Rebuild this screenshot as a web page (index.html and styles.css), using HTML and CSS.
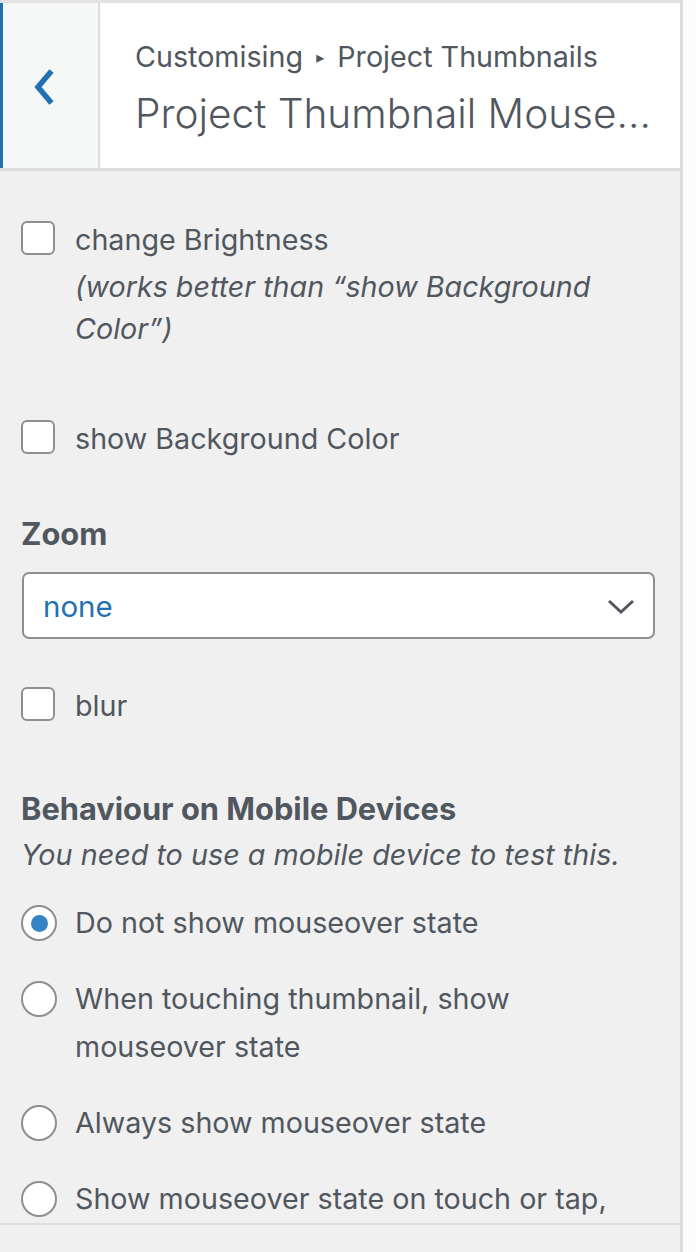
FILE: index.html
```html
<!DOCTYPE html>
<html lang="en">
<head>
<meta charset="utf-8">
<title>Project Thumbnail Mouseover</title>
<link rel="stylesheet" href="styles.css">
</head>
<body>
<div class="panel">
  <header class="head">
    <button class="back" type="button" aria-label="Back">
      <svg class="back-icon" width="22" height="38" viewBox="0 0 22 38"><polyline points="18.5,3 5,19 18.5,35" fill="none" stroke="#2271b1" stroke-width="5.5"/></svg>
    </button>
    <div class="titles">
      <div class="crumb">Customising <span class="tri">▸</span> Project Thumbnails</div>
      <div class="title">Project Thumbnail Mouse...</div>
    </div>
  </header>
  <main class="content">
    <div class="check-row first">
      <span class="box"></span>
      <div class="check-text">
        <div class="check-label">change Brightness</div>
        <div class="desc">(works better than “show Background Color”)</div>
      </div>
    </div>
    <div class="check-row second">
      <span class="box"></span>
      <div class="check-text"><div class="check-label">show Background Color</div></div>
    </div>
    <div class="heading zoom">Zoom</div>
    <div class="select">
      <span class="select-value">none</span>
      <svg class="select-arrow" width="28" height="16" viewBox="0 0 28 16"><polyline points="2,2 14,13 26,2" fill="none" stroke="#50575e" stroke-width="3"/></svg>
    </div>
    <div class="check-row blur">
      <span class="box"></span>
      <div class="check-text"><div class="check-label">blur</div></div>
    </div>
    <div class="heading mobile">Behaviour on Mobile Devices</div>
    <div class="note">You need to use a mobile device to test this.</div>
    <div class="radios">
      <div class="radio-row"><span class="radio checked"></span><span class="radio-label">Do not show mouseover state</span></div>
      <div class="radio-row"><span class="radio"></span><span class="radio-label">When touching thumbnail, show mouseover state</span></div>
      <div class="radio-row"><span class="radio"></span><span class="radio-label">Always show mouseover state</span></div>
      <div class="radio-row"><span class="radio"></span><span class="radio-label">Show mouseover state on touch or tap,</span></div>
    </div>
  </main>
  <footer class="foot"></footer>
</div>
</body>
</html>
```
FILE: styles.css
```css
html, body {
  margin: 0;
  padding: 0;
  background: #fcfcfc;
}
body {
  font-family: Inter, "Liberation Sans", sans-serif;
  color: #50575e;
}
.panel {
  width: 680px;
  height: 1252px;
  background: #f0f0f1;
  border-right: 3px solid #dcdcde;
  display: flex;
  flex-direction: column;
  overflow: hidden;
}
.head {
  display: flex;
  height: 165px;
  border-top: 3px solid #e2e2e4;
  border-bottom: 3px solid #dcdcde;
  background: #fff;
  flex: none;
}
.back {
  width: 100px;
  flex: none;
  margin: 0;
  padding: 0;
  border: 0;
  border-left: 3px solid #2271b1;
  border-right: 2px solid #dcdcde;
  background: #f6f7f7;
  display: flex;
  align-items: center;
  justify-content: flex-start;
}
.back-icon {
  margin-left: 30px;
  margin-top: 3px;
}
.titles {
  flex: 1;
  padding-left: 35px;
  padding-top: 34px;
  min-width: 0;
}
.crumb {
  font-size: 28.7px;
  line-height: 40px;
  white-space: nowrap;
}
.tri {
  font-family: "DejaVu Sans", sans-serif;
  font-size: 16px;
  vertical-align: 4px;
  margin: 0 5px;
}
.title {
  font-size: 40.6px;
  font-weight: 300;
  line-height: 56px;
  margin-top: 8px;
  white-space: nowrap;
}
.content {
  flex: none;
  height: 1052px;
  overflow: hidden;
  padding: 0 25px 0 21px;
}
.check-row {
  display: flex;
  align-items: flex-start;
  gap: 20px;
}
.first { margin-top: 46px; }
.second { margin-top: 66px; }
.blur { margin-top: 44px; }
.box {
  flex: none;
  width: 30px;
  height: 30px;
  margin-top: 4px;
  border: 2px solid #8c8f94;
  border-radius: 6px;
  background: #fff;
}
.check-text {
  font-size: 28.7px;
}
.check-label {
  line-height: 46px;
}
.desc {
  font-style: italic;
  line-height: 42px;
  margin-top: 3px;
  padding-right: 50px;
}
.heading {
  font-size: 30.8px;
  font-weight: 700;
  line-height: 44px;
}
.zoom { margin-top: 50px; }
.mobile { margin-top: 58px; }
.select {
  margin: 16px 0 0 1px;
  height: 63px;
  border: 2px solid #8c8f94;
  border-radius: 7px;
  background: #fff;
  display: flex;
  align-items: center;
  justify-content: space-between;
  padding: 0 18px 0 19px;
}
.select-value {
  font-size: 29.5px;
  color: #2271b1;
}
.select-arrow {
  margin-top: 2px;
}
.note {
  font-size: 28.75px;
  font-style: italic;
  line-height: 44px;
  margin-top: 2px;
}
.radios {
  margin-top: 22px;
  display: flex;
  flex-direction: column;
  gap: 28px;
}
.radio-row {
  display: flex;
  align-items: flex-start;
  gap: 18px;
  font-size: 28.7px;
  line-height: 48px;
}
.radio {
  flex: none;
  width: 32px;
  height: 32px;
  margin-top: 6px;
  border: 2px solid #8c8f94;
  border-radius: 50%;
  background: #fff;
  display: flex;
  align-items: center;
  justify-content: center;
}
.checked::after {
  content: "";
  width: 17px;
  height: 17px;
  border-radius: 50%;
  background: #3582c4;
}
.radio-label {
  max-width: 548px;
}
.foot {
  flex: 1;
  border-top: 2px solid #dcdcde;
}
```
